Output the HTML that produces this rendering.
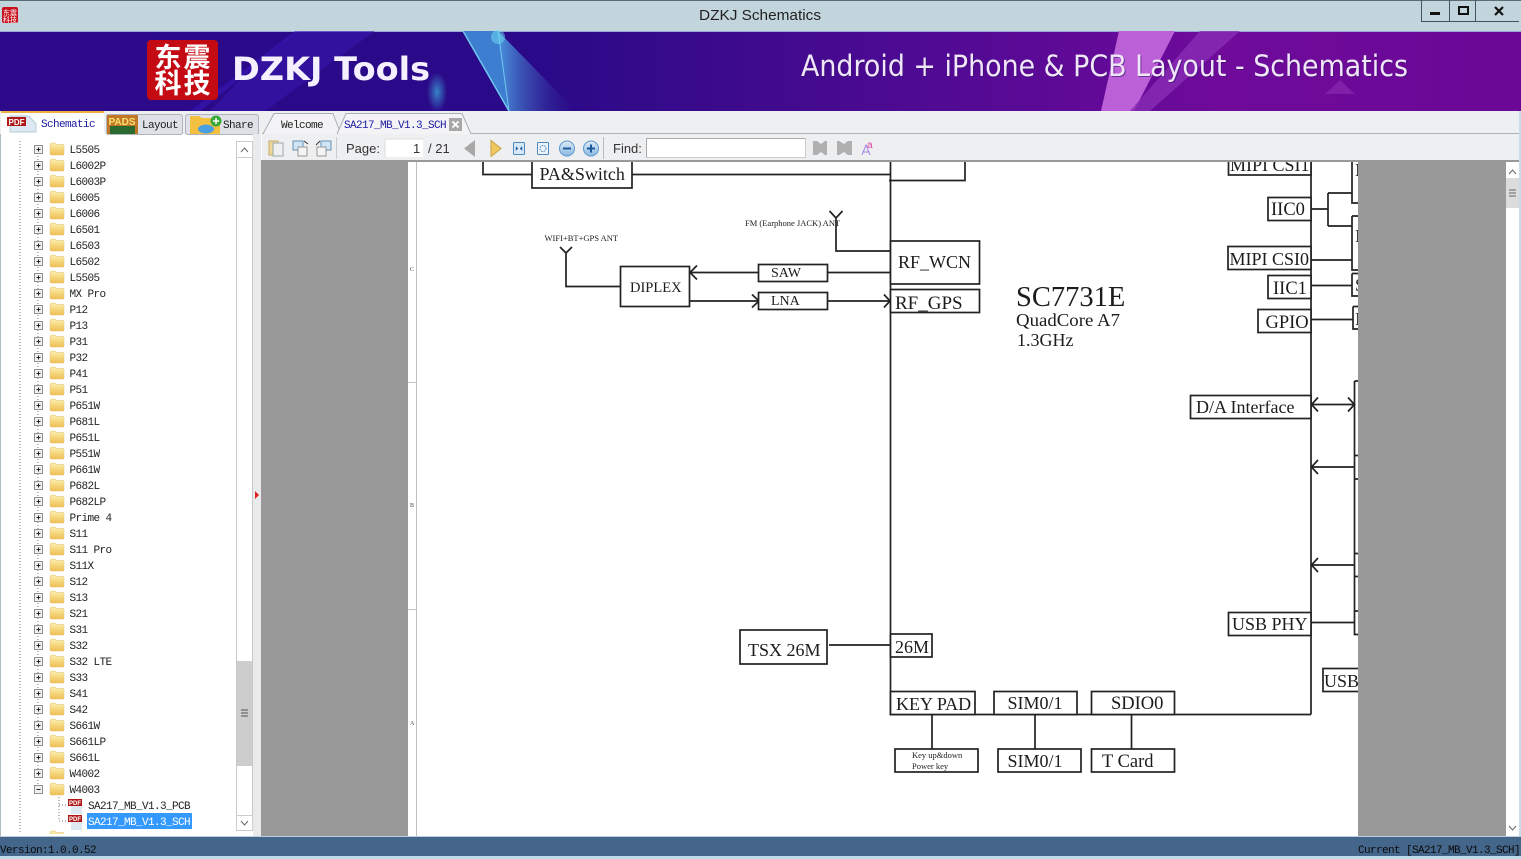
<!DOCTYPE html>
<html><head><meta charset="utf-8"><title>DZKJ Schematics</title>
<style>
html,body{margin:0;padding:0;background:#fff;width:1521px;height:859px;overflow:hidden}
svg{display:block}
.t text{font-family:"Liberation Mono",monospace;font-size:11px;letter-spacing:-.6px;fill:#222}
.s text{font-family:"Liberation Serif",serif;fill:#1c1c1c}
.s rect{fill:#fff;stroke:#222;stroke-width:1.7}
.s path{fill:none;stroke:#222;stroke-width:1.7}
.ui{font-family:"Liberation Sans",sans-serif;font-size:13px;fill:#333}
.m{font-family:"Liberation Mono",monospace;font-size:11px;letter-spacing:-.6px}
</style></head><body>
<svg width="1521" height="859" viewBox="0 0 1521 859" xmlns="http://www.w3.org/2000/svg">
<defs>
<linearGradient id="ban" x1="0" x2="1" y1="0" y2="0"><stop offset="0" stop-color="#2c0a8a"/><stop offset=".36" stop-color="#2a0a88"/><stop offset=".66" stop-color="#570a95"/><stop offset=".8" stop-color="#6f0a9a"/><stop offset="1" stop-color="#6b0896"/></linearGradient>
<linearGradient id="st" x1="0" x2="1" y1="0" y2="0"><stop offset="0" stop-color="#4a94dc"/><stop offset="1" stop-color="#2a0a88" stop-opacity=".2"/></linearGradient>
<linearGradient id="fold" x1="0" x2="0" y1="0" y2="1"><stop offset="0" stop-color="#fdf0b0"/><stop offset="1" stop-color="#eec050"/></linearGradient>
<linearGradient id="blue" x1="0" x2="0" y1="0" y2="1"><stop offset="0" stop-color="#dcebf8"/><stop offset="1" stop-color="#8ab8e0"/></linearGradient>
<radialGradient id="glow"><stop offset="0" stop-color="#3aa0d8" stop-opacity=".8"/><stop offset="1" stop-color="#3aa0d8" stop-opacity="0"/></radialGradient>
<g id="f"><path d="M0 2.5 L1 1 H5 L6.5 2.5 H13 Q14 2.500 14 3.500 V12 Q14 13 13 13 H1 Q0 13 0 12Z" fill="url(#fold)" stroke="#e0c070" stroke-width=".5"/></g>
<g id="p"><rect x="-4" y="-4" width="8" height="8" fill="#f0f0f0" stroke="#909090"/><path d="M-2 0H2M0-2V2" stroke="#222" fill="none"/></g>
<g id="pdf"><rect x="3" y="3" width="11" height="12" fill="#dde8f0"/><rect x="0" y="0" width="14" height="7" fill="#b01818"/><text x="7" y="6" font-size="6" font-weight="700" fill="#fff" text-anchor="middle" font-family="'Liberation Sans',sans-serif" style="font-family:'Liberation Sans',sans-serif;font-size:6px;letter-spacing:0;fill:#fff">PDF</text></g>
<clipPath id="pg"><rect x="408" y="162" width="950" height="674"/></clipPath>
</defs>

<!-- title bar -->
<rect width="1521" height="31" fill="#c3d5dc"/>
<rect width="1521" height="1" fill="#5c6c74"/>
<rect x="2" y="7" width="16" height="16" rx="2" fill="#c8101c"/>
<text x="10" y="15" font-size="7" fill="#fff" text-anchor="middle" font-family="'Noto Sans CJK SC',sans-serif">东震</text>
<text x="10" y="22" font-size="7" fill="#fff" text-anchor="middle" font-family="'Noto Sans CJK SC',sans-serif">科技</text>
<text x="699" y="20" font-family="'Liberation Sans',sans-serif" font-size="15" fill="#222" textLength="122" lengthAdjust="spacingAndGlyphs">DZKJ Schematics</text>
<path d="M1421.5 0V21.5H1519M1449.5 0V21.5M1475.5 0V21.5" fill="none" stroke="#44545c"/>
<rect x="1430" y="12" width="10" height="3" fill="#111"/>
<rect x="1459" y="7" width="9" height="7" fill="none" stroke="#111" stroke-width="2"/>
<path d="M1495 7L1503 15M1503 7L1495 15" stroke="#111" stroke-width="2.200" fill="none"/>

<!-- banner -->
<rect y="31" width="1521" height="80" fill="url(#ban)"/>
<rect y="31" width="1521" height="1" fill="#9aa8d8"/>
<path d="M200 111L300 31H295L190 111Z" fill="#3a1ac0" opacity=".5"/>
<path d="M245 75L300 31H375L265 111H210Z" fill="#3a18b0" opacity=".55"/>
<path d="M498 31L576 111H509Z" fill="url(#st)"/>
<path d="M463 31H498L509 111Z" fill="#3d7ed0"/>
<path d="M463 31L509 111" stroke="#70c8f0" stroke-width="1.500" fill="none"/>
<path d="M498 31L509 111" stroke="#70c8f0" stroke-width="1" fill="none"/>
<circle cx="498" cy="37" r="7" fill="#70e0f0" opacity=".5"/>
<ellipse cx="437" cy="92" rx="10" ry="20" fill="url(#glow)"/>
<path d="M1119 31H1175L1134 111H1101Z" fill="#bc60d8"/>
<path d="M1200 31H1240L1150 111H1130Z" fill="#8a2cb4" opacity=".8"/>
<path d="M1325 94L1340 80L1355 94Z" fill="#8526ac" opacity=".8"/>
<rect x="147" y="40" width="71" height="60" rx="4" fill="#c40a12"/>
<g font-family="'Noto Sans CJK SC',sans-serif" font-size="27" font-weight="700" fill="#fff" text-anchor="middle">
<text x="168" y="67">东</text><text x="197" y="67">震</text>
<text x="168" y="93">科</text><text x="197" y="93">技</text></g>
<text x="232" y="80" font-family="'DejaVu Sans',sans-serif" font-weight="700" font-size="32" fill="#f4f0ff" textLength="198" lengthAdjust="spacingAndGlyphs">DZKJ Tools</text>
<text x="802" y="77" font-family="'DejaVu Sans',sans-serif" font-size="29" fill="#3a1070" opacity=".6" textLength="607" lengthAdjust="spacingAndGlyphs">Android + iPhone &amp; PCB Layout - Schematics</text>
<text x="801" y="76" font-family="'DejaVu Sans',sans-serif" font-size="29" fill="#efe6f6" textLength="607" lengthAdjust="spacingAndGlyphs">Android + iPhone &amp; PCB Layout - Schematics</text>

<!-- tab strip / toolbar -->
<rect y="111" width="1521" height="25" fill="#eeeff1"/>
<rect x="262" y="134" width="1259" height="28" fill="#eeeff1"/>
<rect x="0" y="134" width="262" height="703" fill="#fff"/>
<path d="M262 133.5H1521" stroke="#a8b4b8"/>

<!-- left tabs -->
<rect x="1" y="112" width="103" height="24" fill="#fff"/>
<rect x="1" y="111" width="103" height="2" fill="#f0b040"/>
<path d="M10 132H36V124L29 116H10Z" fill="#dce8f2" stroke="#b8ccd8"/>
<rect x="7" y="117" width="19" height="9" fill="#b01818"/>
<text x="16.500" y="125" font-size="8" font-weight="700" fill="#fff" text-anchor="middle" font-family="'Liberation Sans',sans-serif">PDF</text>
<text x="41" y="127" class="m" fill="#1a1aa0">Schematic</text>
<rect x="106.500" y="114.500" width="76" height="20" rx="2" fill="#dfe1e8" stroke="#b0b4bc"/>
<rect x="107" y="115" width="31" height="19" fill="#c07828"/>
<rect x="110" y="126" width="25" height="8" fill="#2a6a30"/>
<text x="122" y="125" font-size="10" font-weight="700" fill="#f8e070" text-anchor="middle" font-family="'Liberation Sans',sans-serif">PADS</text>
<text x="142" y="128" class="m" fill="#222">Layout</text>
<rect x="185.500" y="114.500" width="73" height="20" rx="2" fill="#dfe1e8" stroke="#b0b4bc"/>
<path d="M190 134V116H199L202 118H220V134Z" fill="#f4c040"/>
<ellipse cx="206" cy="129" rx="8" ry="4.500" fill="#4aa0e0"/>
<circle cx="216" cy="121" r="5.500" fill="#3aa83a"/><path d="M213 121H219M216 118V124" stroke="#fff" stroke-width="1.500"/>
<text x="223" y="128" class="m" fill="#222">Share</text>

<!-- doc tabs -->
<path d="M263 134L274 113.500H333L337 124L341 134" fill="#f3f3f5" stroke="#a8b0b4"/>
<text x="281" y="128" class="m" fill="#222">Welcome</text>
<path d="M337 134L346 113.500H462L471 134" fill="#f4f4f6" stroke="#a8b0b4"/>
<text x="344" y="128" class="m" fill="#1a1aa0">SA217_MB_V1.3_SCH</text>
<rect x="449" y="118" width="13" height="13" fill="#a8a8a8"/>
<path d="M452.500 121.500L458.500 127.500M458.500 121.500L452.500 127.500" stroke="#fff" stroke-width="1.800"/>

<!-- toolbar icons -->
<rect x="269" y="141" width="9" height="14" fill="#f0d8a0" stroke="#c8a868"/>
<rect x="273" y="143" width="10" height="13" fill="#eef0f2" stroke="#9aa"/>
<rect x="293" y="141" width="10" height="9" fill="#cfe4f4" stroke="#6a90b0"/><rect x="298" y="147" width="9" height="9" fill="#f4f4f4" stroke="#999"/>
<path d="M304 141L308 144" stroke="#333" fill="none"/>
<rect x="321" y="141" width="10" height="9" fill="#cfe4f4" stroke="#6a90b0"/><rect x="317" y="147" width="9" height="9" fill="#f4f4f4" stroke="#999"/>
<path d="M316 145L320 141" stroke="#333" fill="none"/>
<path d="M336.500 137V159" stroke="#ccc"/>
<text x="346" y="153" class="ui">Page:</text>
<rect x="385" y="139" width="38" height="18" fill="#fff"/><path d="M385 157V139H423" stroke="#ddd" fill="none"/>
<text x="413" y="153" class="ui">1</text>
<text x="428" y="153" class="ui">/ 21</text>
<path d="M475 140V157L464 148.500Z" fill="#a8a8a8"/>
<path d="M491 140.500V156.500L501 148.500Z" fill="#f0c860" stroke="#c8a040"/>
<rect x="513.500" y="142.500" width="11" height="12" rx="1" fill="#d8e8f6" stroke="#4a88c0"/>
<path d="M518 148.500L516 146.500V150.500ZM520 148.500L522 146.500V150.500Z" fill="#2a68a8" stroke="#2a68a8" stroke-width=".5"/>
<rect x="537.500" y="142.500" width="11" height="12" rx="1" fill="#eef4fa" stroke="#4a88c0"/>
<circle cx="543" cy="148.500" r="3" fill="none" stroke="#4a88c0" stroke-dasharray="1.500 1"/>
<circle cx="567" cy="148.500" r="7.500" fill="url(#blue)" stroke="#5a98cc"/><path d="M563 148.500H571" stroke="#1a5a9a" stroke-width="2"/>
<circle cx="591" cy="148.500" r="7.500" fill="url(#blue)" stroke="#5a98cc"/><path d="M587 148.500H595M591 144.500V152.500" stroke="#1a5a9a" stroke-width="2"/>
<path d="M603.500 137V159" stroke="#bbb"/>
<text x="613" y="153" class="ui">Find:</text>
<rect x="646.500" y="138.500" width="159" height="19" fill="#fff" stroke="#ccc"/><path d="M646.500 157V138.500H805" stroke="#aaa" fill="none"/>
<path d="M813 141H817L821 144L825 141H827V155H825L821 152L817 155H813Z" fill="#b0b0b0"/>
<path d="M837 141H839L844 144L848 141H852V155H848L844 152L839 155H837Z" fill="#b0b0b0"/>
<path d="M862 155L866 145L870 155M863.500 152H868.500" stroke="#a080e0" fill="none"/>
<text x="867" y="148" font-size="10" fill="#e040a0" font-family="'Liberation Sans',sans-serif">a</text>

<!-- tree panel -->
<rect x="0" y="134" width="1" height="703" fill="#aebcc2"/>
<path d="M20 141V832M38 153V788" stroke="#777" stroke-dasharray="1 2" fill="none"/>
<path d="M59 797V821M59 805H68M59 821H68" stroke="#777" stroke-dasharray="1 2" fill="none"/>
<g id="rows" class="t">
<use href="#p" x="38.500" y="149.500"/><use href="#f" x="50" y="142"/><text x="69.500" y="153">L5505</text>
<use href="#p" x="38.500" y="165.500"/><use href="#f" x="50" y="158"/><text x="69.500" y="169">L6002P</text>
<use href="#p" x="38.500" y="181.500"/><use href="#f" x="50" y="174"/><text x="69.500" y="185">L6003P</text>
<use href="#p" x="38.500" y="197.500"/><use href="#f" x="50" y="190"/><text x="69.500" y="201">L6005</text>
<use href="#p" x="38.500" y="213.500"/><use href="#f" x="50" y="206"/><text x="69.500" y="217">L6006</text>
<use href="#p" x="38.500" y="229.500"/><use href="#f" x="50" y="222"/><text x="69.500" y="233">L6501</text>
<use href="#p" x="38.500" y="245.500"/><use href="#f" x="50" y="238"/><text x="69.500" y="249">L6503</text>
<use href="#p" x="38.500" y="261.500"/><use href="#f" x="50" y="254"/><text x="69.500" y="265">L6502</text>
<use href="#p" x="38.500" y="277.500"/><use href="#f" x="50" y="270"/><text x="69.500" y="281">L5505</text>
<use href="#p" x="38.500" y="293.500"/><use href="#f" x="50" y="286"/><text x="69.500" y="297">MX Pro</text>
<use href="#p" x="38.500" y="309.500"/><use href="#f" x="50" y="302"/><text x="69.500" y="313">P12</text>
<use href="#p" x="38.500" y="325.500"/><use href="#f" x="50" y="318"/><text x="69.500" y="329">P13</text>
<use href="#p" x="38.500" y="341.500"/><use href="#f" x="50" y="334"/><text x="69.500" y="345">P31</text>
<use href="#p" x="38.500" y="357.500"/><use href="#f" x="50" y="350"/><text x="69.500" y="361">P32</text>
<use href="#p" x="38.500" y="373.500"/><use href="#f" x="50" y="366"/><text x="69.500" y="377">P41</text>
<use href="#p" x="38.500" y="389.500"/><use href="#f" x="50" y="382"/><text x="69.500" y="393">P51</text>
<use href="#p" x="38.500" y="405.500"/><use href="#f" x="50" y="398"/><text x="69.500" y="409">P651W</text>
<use href="#p" x="38.500" y="421.500"/><use href="#f" x="50" y="414"/><text x="69.500" y="425">P681L</text>
<use href="#p" x="38.500" y="437.500"/><use href="#f" x="50" y="430"/><text x="69.500" y="441">P651L</text>
<use href="#p" x="38.500" y="453.500"/><use href="#f" x="50" y="446"/><text x="69.500" y="457">P551W</text>
<use href="#p" x="38.500" y="469.500"/><use href="#f" x="50" y="462"/><text x="69.500" y="473">P661W</text>
<use href="#p" x="38.500" y="485.500"/><use href="#f" x="50" y="478"/><text x="69.500" y="489">P682L</text>
<use href="#p" x="38.500" y="501.500"/><use href="#f" x="50" y="494"/><text x="69.500" y="505">P682LP</text>
<use href="#p" x="38.500" y="517.500"/><use href="#f" x="50" y="510"/><text x="69.500" y="521">Prime 4</text>
<use href="#p" x="38.500" y="533.500"/><use href="#f" x="50" y="526"/><text x="69.500" y="537">S11</text>
<use href="#p" x="38.500" y="549.500"/><use href="#f" x="50" y="542"/><text x="69.500" y="553">S11 Pro</text>
<use href="#p" x="38.500" y="565.500"/><use href="#f" x="50" y="558"/><text x="69.500" y="569">S11X</text>
<use href="#p" x="38.500" y="581.500"/><use href="#f" x="50" y="574"/><text x="69.500" y="585">S12</text>
<use href="#p" x="38.500" y="597.500"/><use href="#f" x="50" y="590"/><text x="69.500" y="601">S13</text>
<use href="#p" x="38.500" y="613.500"/><use href="#f" x="50" y="606"/><text x="69.500" y="617">S21</text>
<use href="#p" x="38.500" y="629.500"/><use href="#f" x="50" y="622"/><text x="69.500" y="633">S31</text>
<use href="#p" x="38.500" y="645.500"/><use href="#f" x="50" y="638"/><text x="69.500" y="649">S32</text>
<use href="#p" x="38.500" y="661.500"/><use href="#f" x="50" y="654"/><text x="69.500" y="665">S32 LTE</text>
<use href="#p" x="38.500" y="677.500"/><use href="#f" x="50" y="670"/><text x="69.500" y="681">S33</text>
<use href="#p" x="38.500" y="693.500"/><use href="#f" x="50" y="686"/><text x="69.500" y="697">S41</text>
<use href="#p" x="38.500" y="709.500"/><use href="#f" x="50" y="702"/><text x="69.500" y="713">S42</text>
<use href="#p" x="38.500" y="725.500"/><use href="#f" x="50" y="718"/><text x="69.500" y="729">S661W</text>
<use href="#p" x="38.500" y="741.500"/><use href="#f" x="50" y="734"/><text x="69.500" y="745">S661LP</text>
<use href="#p" x="38.500" y="757.500"/><use href="#f" x="50" y="750"/><text x="69.500" y="761">S661L</text>
<use href="#p" x="38.500" y="773.500"/><use href="#f" x="50" y="766"/><text x="69.500" y="777">W4002</text>
<rect x="34.500" y="785.500" width="8" height="8" fill="#f0f0f0" stroke="#909090"/><path d="M36.500 789.500H40.500" stroke="#222"/>
<use href="#f" x="50" y="782"/><text x="69.500" y="793">W4003</text>
<use href="#pdf" x="68" y="799"/><text x="88" y="809">SA217_MB_V1.3_PCB</text>
<use href="#pdf" x="68" y="815"/>
<rect x="87" y="813" width="105" height="16" fill="#3399ff"/>
<text x="88" y="825" style="fill:#fff">SA217_MB_V1.3_SCH</text>
<use href="#f" x="50" y="830"/>
</g>
<rect x="0" y="834" width="262" height="3" fill="#fff"/>
<rect x="0" y="834" width="1" height="3" fill="#aebcc2"/>
<!-- tree scrollbar -->
<rect x="236.500" y="141.500" width="16" height="689" fill="#fff" stroke="#c8c8c8"/>
<rect x="236.500" y="141.500" width="16" height="16" fill="#fff" stroke="#ccc"/>
<path d="M241 152L244.500 148L248 152" stroke="#666" fill="none"/>
<rect x="237" y="661" width="15" height="105" fill="#cdcdcd"/>
<path d="M241 710H248M241 713H248M241 716H248" stroke="#555"/>
<rect x="236.500" y="815.500" width="16" height="15" fill="#fff" stroke="#ccc"/>
<path d="M241 821L244.500 825L248 821" stroke="#666" fill="none"/>
<!-- splitter -->
<rect x="253" y="134" width="8" height="703" fill="#e8eaec"/>
<path d="M255 491L259 495L255 499Z" fill="#e02020"/>

<!-- doc area -->
<rect x="261" y="162" width="1245" height="675" fill="#999"/>
<rect x="261" y="160" width="1260" height="2" fill="#999"/>
<rect x="408" y="162" width="950" height="675" fill="#fff"/>
<path d="M416.500 162V836" stroke="#c0c0c0"/>
<path d="M408 382.500H416M408 609.500H416" stroke="#c0c0c0"/>
<g font-family="'Liberation Serif',serif" font-size="6" fill="#444"><text x="410" y="271">C</text><text x="410" y="507">B</text><text x="410" y="725">A</text></g>

<g class="s" clip-path="url(#pg)">
<path d="M483 160V174.500H532M632 174.500H890M890.500 160V714.500H1311M1311 160V714.500M889 180.500H965V160"/>
<rect x="532" y="160" width="100" height="28"/>
<text x="539.500" y="180" font-size="18">PA&amp;Switch</text>
<path d="M829.500 211L836 218L842.500 211M836 218V251H890"/>
<text x="745" y="226" font-size="8.500">FM (Earphone JACK) ANT</text>
<text x="544.500" y="241" font-size="8.500">WIFI+BT+GPS ANT</text>
<path d="M560 247L566 253L572 247M566 253V286.500H620"/>
<rect x="620.500" y="266.500" width="69" height="40"/>
<text x="630" y="292" font-size="14.500">DIPLEX</text>
<path d="M689 272.500H758M827 272.500H890M697 265.500L690 272.500L697 279.500M689 301H758M827 301H890M752 294.500L759 301L752 307.500M884 294.500L890 301L884 307.500"/>
<rect x="758.500" y="264.500" width="69" height="17"/><text x="771" y="277" font-size="14">SAW</text>
<rect x="758.500" y="292.500" width="69" height="17"/><text x="771" y="305" font-size="14">LNA</text>
<rect x="890.500" y="241" width="89" height="43"/><text x="898" y="268" font-size="18">RF_WCN</text>
<rect x="890.500" y="289.500" width="89" height="23"/><text x="895" y="309" font-size="19">RF_GPS</text>
<text x="1016" y="306" font-size="28.500">SC7731E</text>
<text x="1016" y="326" font-size="18" textLength="104" lengthAdjust="spacingAndGlyphs">QuadCore A7</text>
<text x="1017" y="346" font-size="18">1.3GHz</text>

<rect x="1228.500" y="155" width="82.500" height="20"/><text x="1230" y="171" font-size="18">MIPI CSI1</text>
<rect x="1268" y="197.500" width="43" height="23"/><text x="1271" y="215" font-size="18.500">IIC0</text>
<rect x="1228" y="246.500" width="83" height="23"/><text x="1229.500" y="265" font-size="18">MIPI CSI0</text>
<rect x="1268" y="275.500" width="43" height="23"/><text x="1273" y="294" font-size="18.500">IIC1</text>
<rect x="1258" y="309.500" width="53" height="23"/><text x="1265.500" y="328" font-size="18.500">GPIO</text>
<rect x="1190.500" y="395.500" width="120.500" height="23"/><text x="1196" y="413" font-size="18">D/A Interface</text>
<rect x="1228.500" y="612.500" width="82.500" height="23"/><text x="1232" y="630" font-size="18">USB PHY</text>
<rect x="1323" y="668.500" width="50" height="23"/><text x="1324" y="687" font-size="18">USB</text>

<path d="M1311 209H1328M1328 193V226M1328 193H1352M1352 155V203H1370M1328 226H1352M1352 216H1370M1352 216V270H1370M1311 260H1352M1311 285.500H1352M1352 273.500V296H1370M1352 273.500H1370M1311 319.500H1353M1353 306.500V329H1370M1353 306.500H1370"/>
<path d="M1311 404.500H1354M1318 397.500L1311.500 404.500L1318 411.500M1348 397.500L1354.500 404.500L1348 411.500"/>
<path d="M1354.500 381V634.500H1370M1354.500 381H1370M1354.500 455.500H1370M1354.500 479H1370M1354.500 553.500H1370M1354.500 576.500H1370M1354.500 611H1370"/>
<path d="M1311 467H1354M1318 460L1311.500 467L1318 474M1311 565H1354M1318 558L1311.500 565L1318 572M1311 622.500H1354"/>
<text x="1355" y="176" font-size="18">I</text>
<text x="1355" y="242" font-size="18">I</text>
<text x="1355" y="291" font-size="18">S</text>
<text x="1355" y="325" font-size="18">I</text>

<rect x="740" y="630" width="87" height="34"/><text x="748" y="656" font-size="18">TSX 26M</text>
<path d="M829 645H890"/>
<rect x="890.500" y="634" width="41.500" height="23"/><text x="895" y="653" font-size="18">26M</text>
<rect x="890.500" y="691.500" width="84.500" height="23"/><text x="896" y="710" font-size="18">KEY PAD</text>
<rect x="994" y="691.500" width="83" height="23"/><text x="1007.500" y="709" font-size="18">SIM0/1</text>
<rect x="1091.500" y="691.500" width="83" height="23"/><text x="1111" y="709" font-size="18.500">SDIO0</text>
<path d="M932 714V749M1035 714V749M1131.500 714V749"/>
<rect x="895" y="749" width="83" height="23"/>
<text x="912" y="758" font-size="8.500">Key up&amp;down</text>
<text x="912" y="769" font-size="8.500">Power key</text>
<rect x="998" y="749" width="83" height="23"/><text x="1007.500" y="767" font-size="18">SIM0/1</text>
<rect x="1091.500" y="749" width="83" height="23"/><text x="1102" y="767" font-size="18.500">T Card</text>
</g>

<!-- main scrollbar -->
<rect x="1506" y="162" width="13" height="675" fill="#fff"/>
<path d="M1509 174L1512.500 170L1516 174" stroke="#666" fill="none"/>
<rect x="1506" y="178" width="13" height="30" fill="#dcdcdc"/>
<path d="M1509 190H1516M1509 193H1516M1509 196H1516" stroke="#666"/>
<path d="M1509 826L1512.500 830L1516 826" stroke="#666" fill="none"/>
<rect x="1519" y="111" width="2" height="748" fill="#c8dcec"/>

<!-- status bar -->
<rect y="836" width="1521" height="1" fill="#c0ccd4"/>
<rect y="837" width="1521" height="19" fill="#44668a"/>
<rect y="856" width="1521" height="3" fill="#c0dcec"/>
<text x="0" y="853" class="m" fill="#0a0a0a">Version:1.0.0.52</text>
<text x="1358" y="853" class="m" fill="#0a0a0a">Current [SA217_MB_V1.3_SCH]</text>
</svg>
</body></html>
